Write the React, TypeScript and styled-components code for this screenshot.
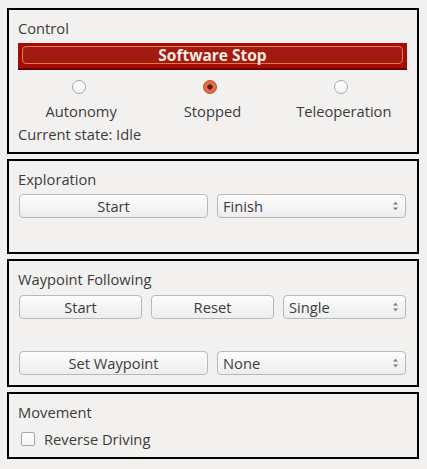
import React from "react";
import styled, { createGlobalStyle } from "styled-components";

const Global = createGlobalStyle`
  html, body {
    margin: 0;
    padding: 0;
    background: #f2f1f0;
  }
  body {
    font-family: "Open Sans", "DejaVu Sans", sans-serif;
    font-size: 14.7px;
    color: #3c3c3c;
  }
`;

const Page = styled.div`
  display: flex;
  flex-direction: column;
  gap: 5px;
  padding: 8px 8px 0 7px;
  width: 427px;
  box-sizing: border-box;
`;

const Group = styled.section<{ $h: number }>`
  box-sizing: border-box;
  height: ${(p) => p.$h}px;
  border: 2px solid #000;
  padding: 9px 10px 0 9px;
  display: flex;
  flex-direction: column;
`;

const Title = styled.div`
  line-height: 18px;
  height: 18px;
`;

const StopButton = styled.button`
  margin-top: 6px;
  height: 27px;
  padding: 3px 4px 4px 4px;
  border: none;
  border-bottom: 2px solid #6c0000;
  background: #a30d08;
  display: flex;
  cursor: pointer;
  font: inherit;
`;

const StopInner = styled.span`
  flex: 1;
  border: 1px solid #e07a48;
  border-radius: 4px;
  background: #a31a10;
  color: #f7ece6;
  font-weight: bold;
  font-size: 15.5px;
  line-height: 16px;
  display: flex;
  align-items: center;
  justify-content: center;
`;

const RadioRow = styled.div`
  display: grid;
  grid-template-columns: repeat(3, 1fr);
  margin: 10px 0 0 -5px;
`;

const RadioItem = styled.label`
  display: flex;
  flex-direction: column;
  align-items: center;
`;

const RadioDot = styled.span<{ $on?: boolean }>`
  box-sizing: border-box;
  width: 14px;
  height: 14px;
  border-radius: 50%;
  border: 1px solid ${(p) => (p.$on ? "#b8482a" : "#a8a8a8")};
  background: ${(p) =>
    p.$on
      ? "radial-gradient(circle, #5a2218 0 2.4px, #e86c44 3px)"
      : "linear-gradient(#ffffff, #f4f4f4)"};
`;

const RadioLabel = styled.span`
  margin-top: 8px;
  padding-left: 5px;
  line-height: 18px;
`;

const StateText = styled.div`
  margin-top: 5px;
  line-height: 18px;
`;

const Row = styled.div<{ $cols: string; $mt: number }>`
  display: grid;
  grid-template-columns: ${(p) => p.$cols};
  column-gap: 9px;
  margin-top: ${(p) => p.$mt}px;
  padding-left: 1px;
  padding-right: 1px;
`;

const PushButton = styled.button`
  box-sizing: border-box;
  height: 24px;
  border: 1px solid #b9b9b9;
  border-radius: 4px;
  background: linear-gradient(#fcfcfc, #ededed);
  color: #3c3c3c;
  font: inherit;
  line-height: 22px;
  padding: 0;
  text-align: center;
`;

const Combo = styled.div`
  box-sizing: border-box;
  height: 24px;
  border: 1px solid #b9b9b9;
  border-radius: 4px;
  background: linear-gradient(#fcfcfc, #ededed);
  display: flex;
  align-items: center;
  justify-content: space-between;
  padding: 0 6px 0 5px;
  line-height: 20px;
`;

const Arrows = () => (
  <svg width="7" height="10" viewBox="0 0 7 10">
    <path d="M3.5 0.8 L6 3.6 L1 3.6 Z" fill="#7a7a7a" />
    <path d="M3.5 9.2 L6 6.4 L1 6.4 Z" fill="#7a7a7a" />
  </svg>
);

const CheckRow = styled.label`
  display: flex;
  align-items: center;
  margin-top: 9px;
  padding-left: 3px;
  gap: 9px;
  line-height: 18px;
`;

const CheckBox = styled.span`
  box-sizing: border-box;
  width: 14px;
  height: 14px;
  border: 1px solid #a4a4a4;
  border-radius: 2px;
  background: linear-gradient(#ffffff, #f6f6f6);
`;

const Select = ({ value }: { value: string }) => (
  <Combo>
    <span>{value}</span>
    <Arrows />
  </Combo>
);

export default function App() {
  return (
    <>
      <Global />
      <Page>
        <Group $h={146}>
          <Title>Control</Title>
          <StopButton>
            <StopInner>Software Stop</StopInner>
          </StopButton>
          <RadioRow>
            <RadioItem>
              <RadioDot />
              <RadioLabel>Autonomy</RadioLabel>
            </RadioItem>
            <RadioItem>
              <RadioDot $on />
              <RadioLabel>Stopped</RadioLabel>
            </RadioItem>
            <RadioItem>
              <RadioDot />
              <RadioLabel>Teleoperation</RadioLabel>
            </RadioItem>
          </RadioRow>
          <StateText>Current state: Idle</StateText>
        </Group>
        <Group $h={95}>
          <Title>Exploration</Title>
          <Row $cols="1fr 1fr" $mt={6}>
            <PushButton>Start</PushButton>
            <Select value="Finish" />
          </Row>
        </Group>
        <Group $h={128}>
          <Title>Waypoint Following</Title>
          <Row $cols="1fr 1fr 1fr" $mt={7}>
            <PushButton>Start</PushButton>
            <PushButton>Reset</PushButton>
            <Select value="Single" />
          </Row>
          <Row $cols="1fr 1fr" $mt={32}>
            <PushButton>Set Waypoint</PushButton>
            <Select value="None" />
          </Row>
        </Group>
        <Group $h={67}>
          <Title>Movement</Title>
          <CheckRow>
            <CheckBox />
            <span>Reverse Driving</span>
          </CheckRow>
        </Group>
      </Page>
    </>
  );
}
